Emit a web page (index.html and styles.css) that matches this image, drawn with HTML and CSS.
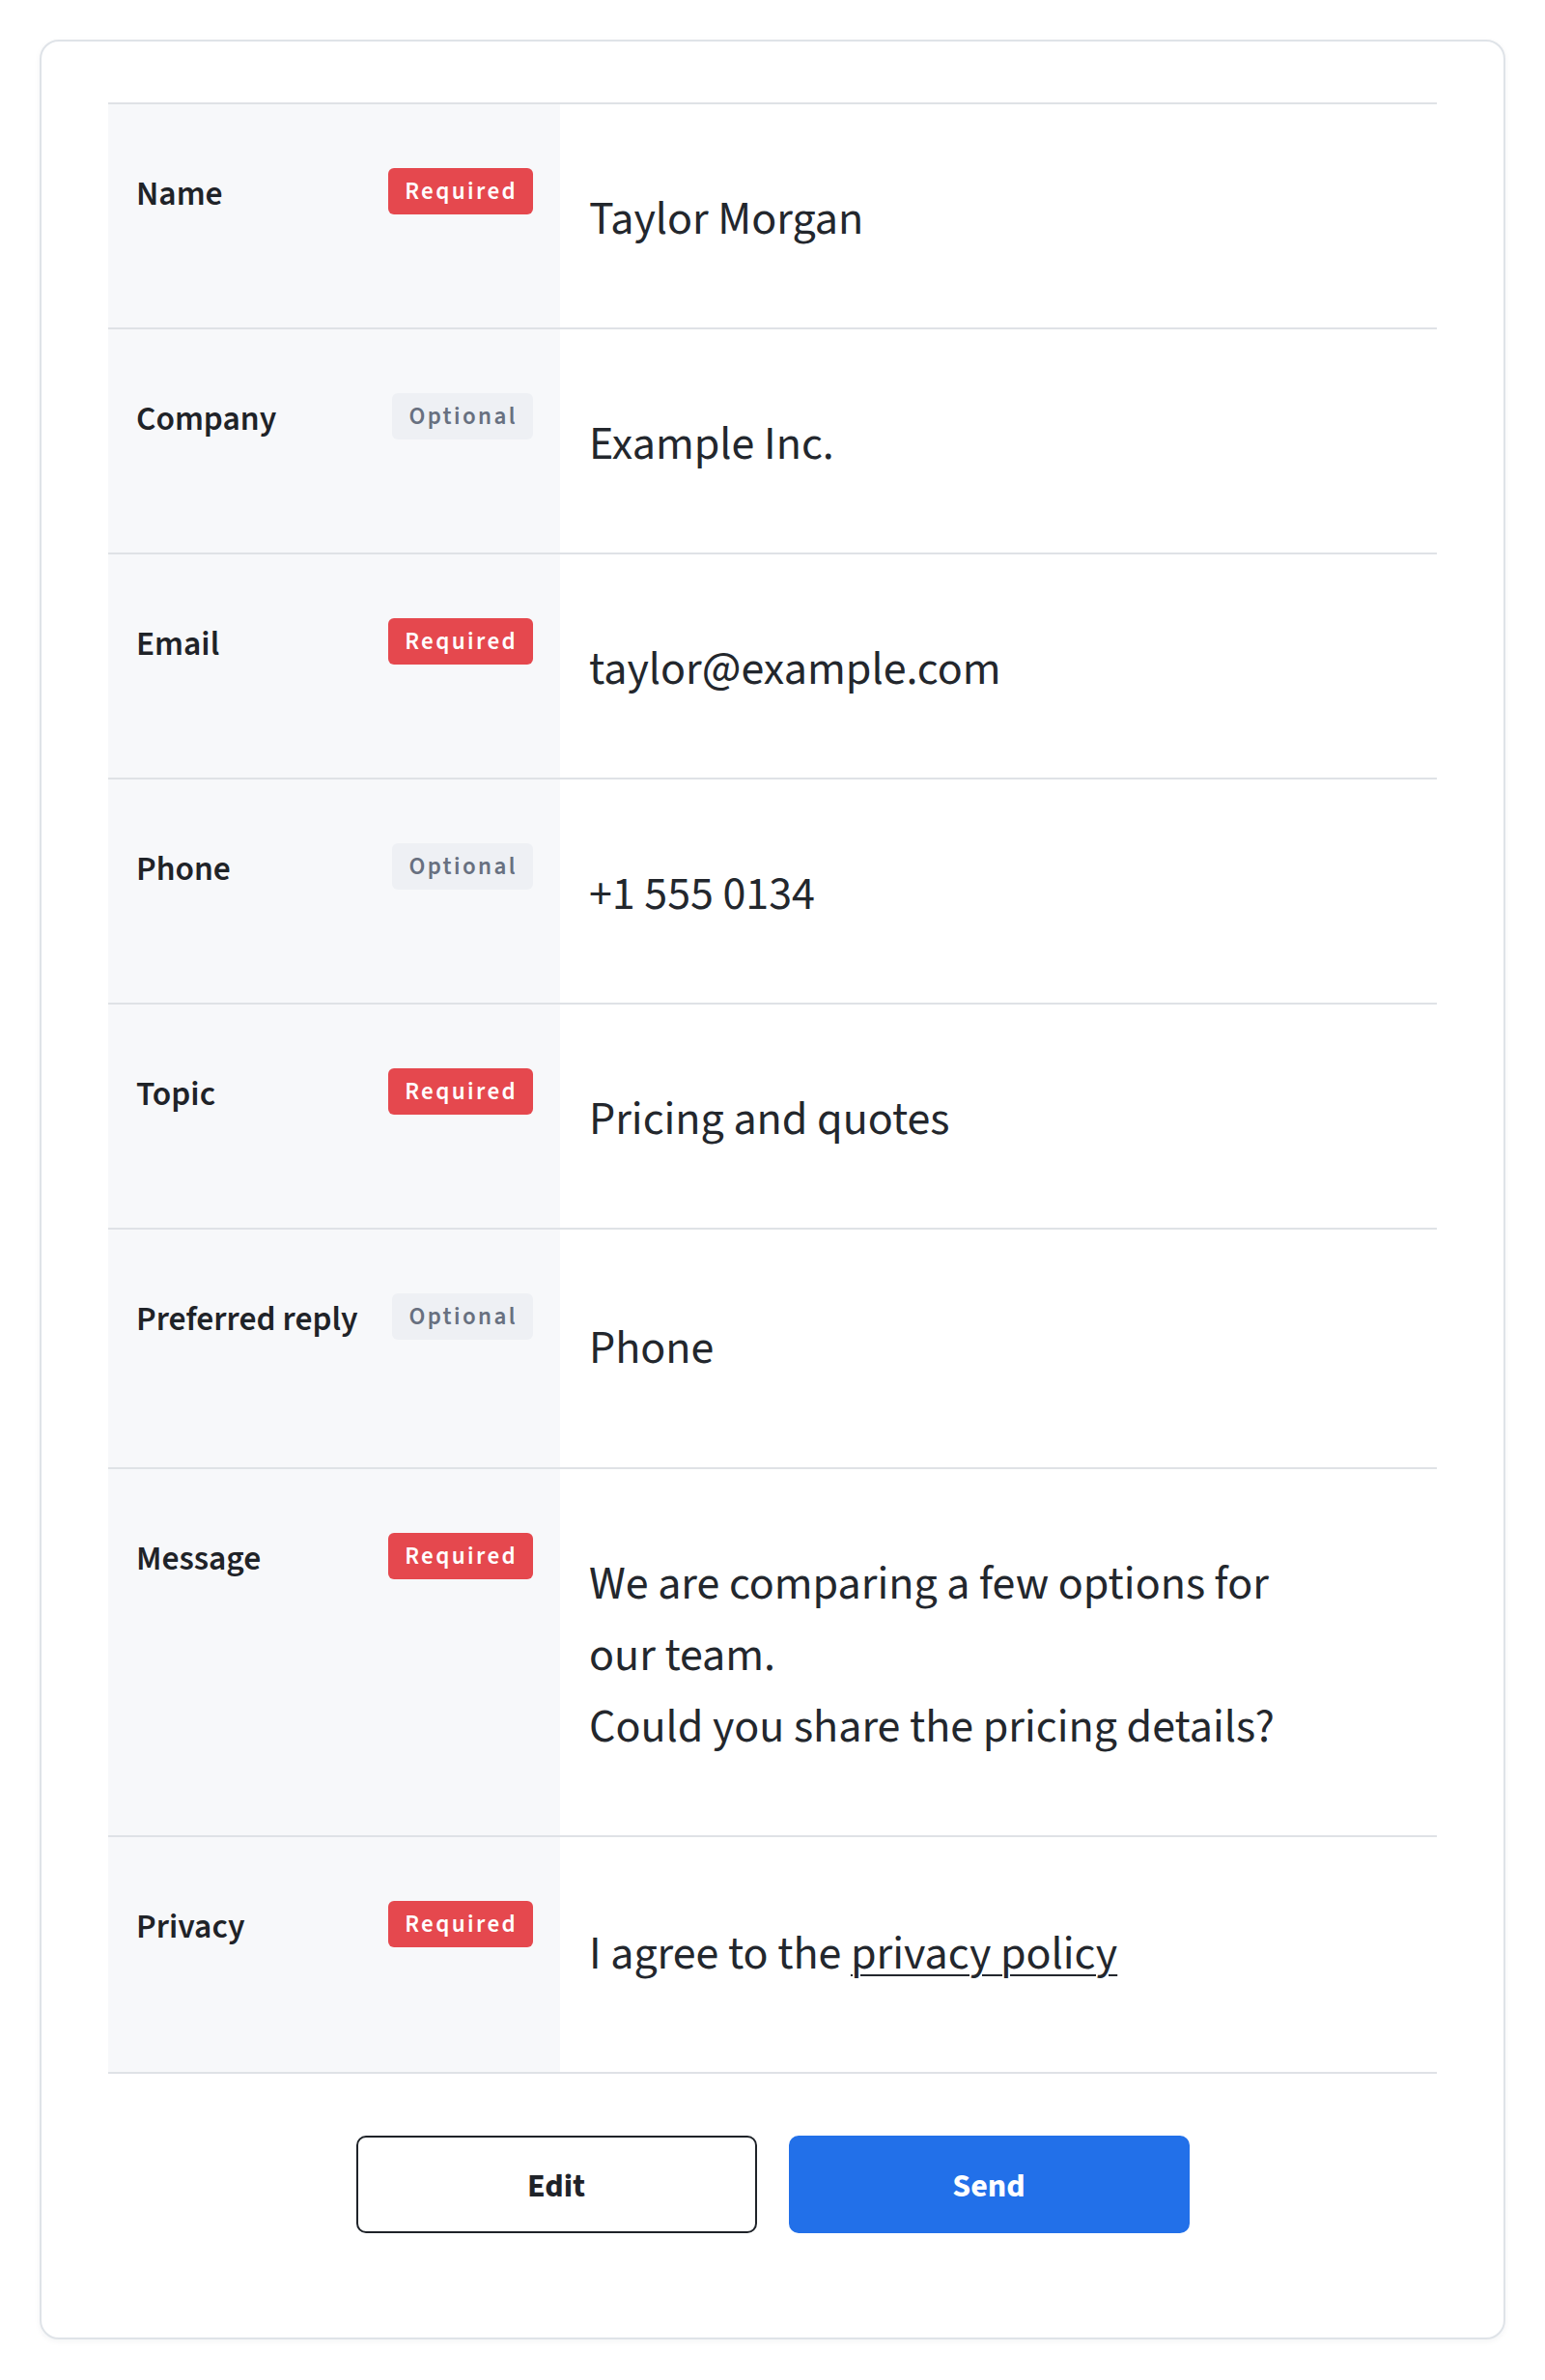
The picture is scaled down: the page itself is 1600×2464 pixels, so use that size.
FILE: index.html
```html
<!DOCTYPE html>
<html lang="en">
<head>
<meta charset="utf-8">
<title>Review your message</title>
<link rel="stylesheet" href="styles.css">
</head>
<body>
<main class="card">
  <dl class="review">
    <div class="row">
      <dt class="label-cell"><span class="label">Name</span><span class="badge badge--required">Required</span></dt>
      <dd class="value">Taylor Morgan</dd>
    </div>
    <div class="row">
      <dt class="label-cell"><span class="label">Company</span><span class="badge badge--optional">Optional</span></dt>
      <dd class="value">Example Inc.</dd>
    </div>
    <div class="row">
      <dt class="label-cell"><span class="label">Email</span><span class="badge badge--required">Required</span></dt>
      <dd class="value">taylor@example.com</dd>
    </div>
    <div class="row">
      <dt class="label-cell"><span class="label">Phone</span><span class="badge badge--optional">Optional</span></dt>
      <dd class="value">+1 555 0134</dd>
    </div>
    <div class="row">
      <dt class="label-cell"><span class="label">Topic</span><span class="badge badge--required">Required</span></dt>
      <dd class="value">Pricing and quotes</dd>
    </div>
    <div class="row row--reply">
      <dt class="label-cell"><span class="label">Preferred reply</span><span class="badge badge--optional">Optional</span></dt>
      <dd class="value">Phone</dd>
    </div>
    <div class="row">
      <dt class="label-cell"><span class="label">Message</span><span class="badge badge--required">Required</span></dt>
      <dd class="value value--message">We are comparing a few options for our team.<br>Could you share the pricing details?</dd>
    </div>
    <div class="row row--privacy">
      <dt class="label-cell"><span class="label">Privacy</span><span class="badge badge--required">Required</span></dt>
      <dd class="value">I agree to the <a class="link" href="#">privacy policy</a></dd>
    </div>
  </dl>
  <div class="actions">
    <button class="btn btn--secondary" type="button">Edit</button>
    <button class="btn btn--primary" type="button">Send</button>
  </div>
</main>
</body>
</html>
```

FILE: styles.css
```css
* {
  box-sizing: border-box;
}

html, body {
  margin: 0;
  background: #ffffff;
}

body {
  padding: 41px 41px 40px;
  font-family: "Source Sans 3", "Source Sans Pro", "Noto Sans", sans-serif;
  color: #1f2328;
}

.card {
  border: 2px solid #dfe3e8;
  border-radius: 20px;
  background: #ffffff;
  box-shadow: 0 2px 6px rgba(20, 30, 50, 0.05);
  padding: 63px 69px 108px;
}

.review {
  margin: 0;
  border-bottom: 2px solid #dfe2e6;
}

.row {
  display: grid;
  grid-template-columns: 468px 1fr;
  border-top: 2px solid #dfe2e6;
}

.label-cell {
  margin: 0;
  background: #f7f8fa;
  padding: 66px 28px 0 29px;
  display: flex;
  justify-content: space-between;
  align-items: flex-start;
  gap: 16px;
}

.label {
  font-size: 35.5px;
  line-height: 50px;
  font-weight: 600;
  color: #1f2328;
  margin-top: 2px;
  white-space: nowrap;
}

.badge {
  display: inline-block;
  font-size: 25px;
  font-weight: 600;
  letter-spacing: 2.4px;
  line-height: 38px;
  padding: 5px 16px 5px 17px;
  border-radius: 6px;
  white-space: nowrap;
}

.badge--required {
  background: #e5484e;
  color: #ffffff;
}

.badge--optional {
  background: #eef0f4;
  color: #687080;
}

.value {
  margin: 0;
  padding: 82px 30px 75px;
  font-size: 48px;
  line-height: 74px;
  color: #23272d;
  display: flex;
  flex-direction: column;
  justify-content: center;
}

.value--message {
  display: block;
  padding-right: 150px;
}

.row--reply .value {
  padding-top: 86px;
  padding-bottom: 86px;
}

.row--privacy .value {
  padding-top: 84px;
  padding-bottom: 85px;
  display: block;
}

.link {
  color: inherit;
  text-decoration: underline;
  text-decoration-thickness: 2px;
  text-underline-offset: 6px;
}

.actions {
  display: flex;
  justify-content: center;
  gap: 33px;
  margin-top: 64px;
}

.btn {
  width: 415px;
  height: 101px;
  padding: 4px 0 0;
  border-radius: 10px;
  font-family: inherit;
  font-size: 34px;
  font-weight: 700;
  cursor: pointer;
}

.btn--secondary {
  background: #ffffff;
  border: 2px solid #1f2329;
  color: #1f2329;
}

.btn--primary {
  background: #2270e9;
  border: 2px solid #2270e9;
  color: #ffffff;
}
```
